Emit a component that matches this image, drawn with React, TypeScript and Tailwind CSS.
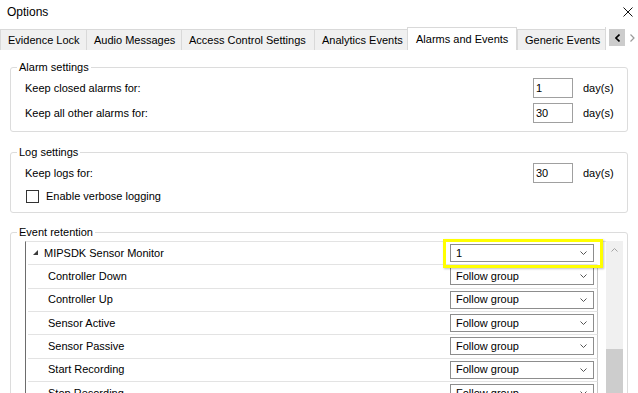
import React from 'react';

const tabs = [
  { label: 'Evidence Lock', w: 'w-[86px]' },
  { label: 'Audio Messages', w: 'w-[95px]' },
  { label: 'Access Control Settings', w: 'w-[133px]' },
  { label: 'Analytics Events', w: 'w-[93px]' },
  { label: 'Alarms and Events', w: 'w-[110px]', active: true },
  { label: 'Generic Events', w: 'w-[88px]' },
];

const events = [
  'Controller Down',
  'Controller Up',
  'Sensor Active',
  'Sensor Passive',
  'Start Recording',
  'Stop Recording',
  'Tamper',
];

const Chevron = ({ up = false, color = '#555' }: { up?: boolean; color?: string }) => (
  <svg width="7" height="4" viewBox="0 0 7 4" className="block">
    <path
      d={up ? 'M0.5 3.5 L3.5 0.5 L6.5 3.5' : 'M0.5 0.5 L3.5 3.5 L6.5 0.5'}
      fill="none"
      stroke={color}
      strokeWidth="1"
    />
  </svg>
);

const Combo = ({ value }: { value: string }) => (
  <div className="flex h-[18px] w-[144px] items-center justify-between border border-[#8d8d8d] bg-white pl-[5px] pr-[6px]">
    <span>{value}</span>
    <Chevron />
  </div>
);

const DaysField = ({ value }: { value: string }) => (
  <div className="flex items-center">
    <div className="flex h-[20px] w-[40px] items-center border border-[#a0a0a0] pl-[2px]">{value}</div>
    <span className="ml-[10px] w-[44px]">day(s)</span>
  </div>
);

const Group = ({ title, className, children }: { title: string; className?: string; children: React.ReactNode }) => (
  <fieldset className={`rounded-[3px] border border-[#dcdcdc] ${className ?? ''}`}>
    <legend className="ml-[6px] px-[2px] leading-[13px]">{title}</legend>
    {children}
  </fieldset>
);

export default function App() {
  return (
    <div className="h-[393px] w-[638px] overflow-hidden bg-white text-[11px] leading-[13px] text-black [font-family:'Liberation_Sans',Arial,sans-serif]">
      {/* title bar */}
      <div className="flex h-[27px] items-start justify-between pl-[7px] pr-[5px] pt-[5px]">
        <span className="text-[12px] leading-[14px]">Options</span>
        <svg width="10" height="10" viewBox="0 0 10 10" className="mt-[2px]">
          <path d="M0.5 0.5 L9.5 9.5 M9.5 0.5 L0.5 9.5" stroke="#111" strokeWidth="1" />
        </svg>
      </div>

      {/* tabs */}
      <div className="flex h-[23px] items-end">
        {tabs.map((t) =>
          t.active ? (
            <div
              key={t.label}
              className={`${t.w} flex h-[23px] shrink-0 items-center border-x border-t border-[#d9d9d9] bg-white pl-[8px]`}
            >
              {t.label}
            </div>
          ) : (
            <div
              key={t.label}
              className={`${t.w} flex h-[21px] shrink-0 items-center border-l border-t border-[#d9d9d9] bg-[#f0f0f0] pl-[7px]`}
            >
              {t.label}
            </div>
          ),
        )}
        <div className="flex h-[23px] flex-1 items-start border-l border-[#d9d9d9] pt-[2px]">
          <div className="ml-[3px] flex h-[17px] w-[16px] items-center justify-center bg-[#cccccc]">
            <svg width="5" height="8" viewBox="0 0 5 8">
              <path d="M4.5 0.5 L1 4 L4.5 7.5" fill="none" stroke="#000" strokeWidth="1.6" />
            </svg>
          </div>
          <div className="flex h-[17px] w-[14px] items-center justify-center">
            <svg width="5" height="8" viewBox="0 0 5 8">
              <path d="M0.5 0.5 L4 4 L0.5 7.5" fill="none" stroke="#9a9a9a" strokeWidth="1.2" />
            </svg>
          </div>
        </div>
      </div>

      {/* page */}
      <div className="px-[10px]">
        <Group title="Alarm settings" className="mt-[11px]">
          <div className="flex flex-col gap-[5px] pb-[8px] pl-[14px] pt-[4px]">
            <div className="flex h-[20px] items-center justify-between">
              <span>Keep closed alarms for:</span>
              <DaysField value="1" />
            </div>
            <div className="flex h-[20px] items-center justify-between">
              <span>Keep all other alarms for:</span>
              <DaysField value="30" />
            </div>
          </div>
        </Group>

        <Group title="Log settings" className="mt-[14px]">
          <div className="flex flex-col pb-[9px] pl-[14px] pt-[4px]">
            <div className="flex h-[20px] items-center justify-between">
              <span>Keep logs for:</span>
              <DaysField value="30" />
            </div>
            <div className="mt-[7px] flex h-[13px] items-center">
              <div className="ml-[1px] h-[13px] w-[13px] border border-[#333]" />
              <span className="ml-[7px]">Enable verbose logging</span>
            </div>
          </div>
        </Group>

        <Group title="Event retention" className="mt-[13px]">
          <div className="ml-[14px] mr-[4px] mt-[2px] flex h-[200px]">
            <div className="flex-1 border-l border-t border-l-[#6d6d6d] border-t-[#e3e3e3]">
              <div className="ml-[2px] mr-[8px]">
                <div className="flex h-[23.33px] items-center justify-between border-b border-r border-b-[#e3e3e3] border-r-white pl-[5px] pr-[3px]">
                  <div className="flex items-center">
                    <svg width="5" height="5" viewBox="0 0 5 5" className="mb-[1px]">
                      <polygon points="5,0 5,5 0,5" fill="#3c3c3c" />
                    </svg>
                    <span className="ml-[6px]">MIPSDK Sensor Monitor</span>
                  </div>
                  <div className="relative">
                    <Combo value="1" />
                    <div className="absolute -bottom-[6px] -left-[7px] -right-[9px] -top-[5px] border-[3px] border-[#ffff00] shadow-[1px_1px_2px_rgba(0,0,0,0.25)]" />
                  </div>
                </div>
                {events.map((e) => (
                  <div
                    key={e}
                    className="flex h-[23.33px] items-center justify-between border-b border-r border-b-[#e3e3e3] border-r-[#c8c8c8] pl-[20px] pr-[3px]"
                  >
                    <span>{e}</span>
                    <Combo value="Follow group" />
                  </div>
                ))}
              </div>
            </div>
            <div className="flex w-[17px] flex-col bg-[#f0f0f0]">
              <div className="flex h-[17px] items-center justify-center">
                <Chevron up color="#a3a3a3" />
              </div>
              <div className="mt-[91px] flex-1 bg-[#cdcdcd]" />
            </div>
          </div>
        </Group>
      </div>
    </div>
  );
}
